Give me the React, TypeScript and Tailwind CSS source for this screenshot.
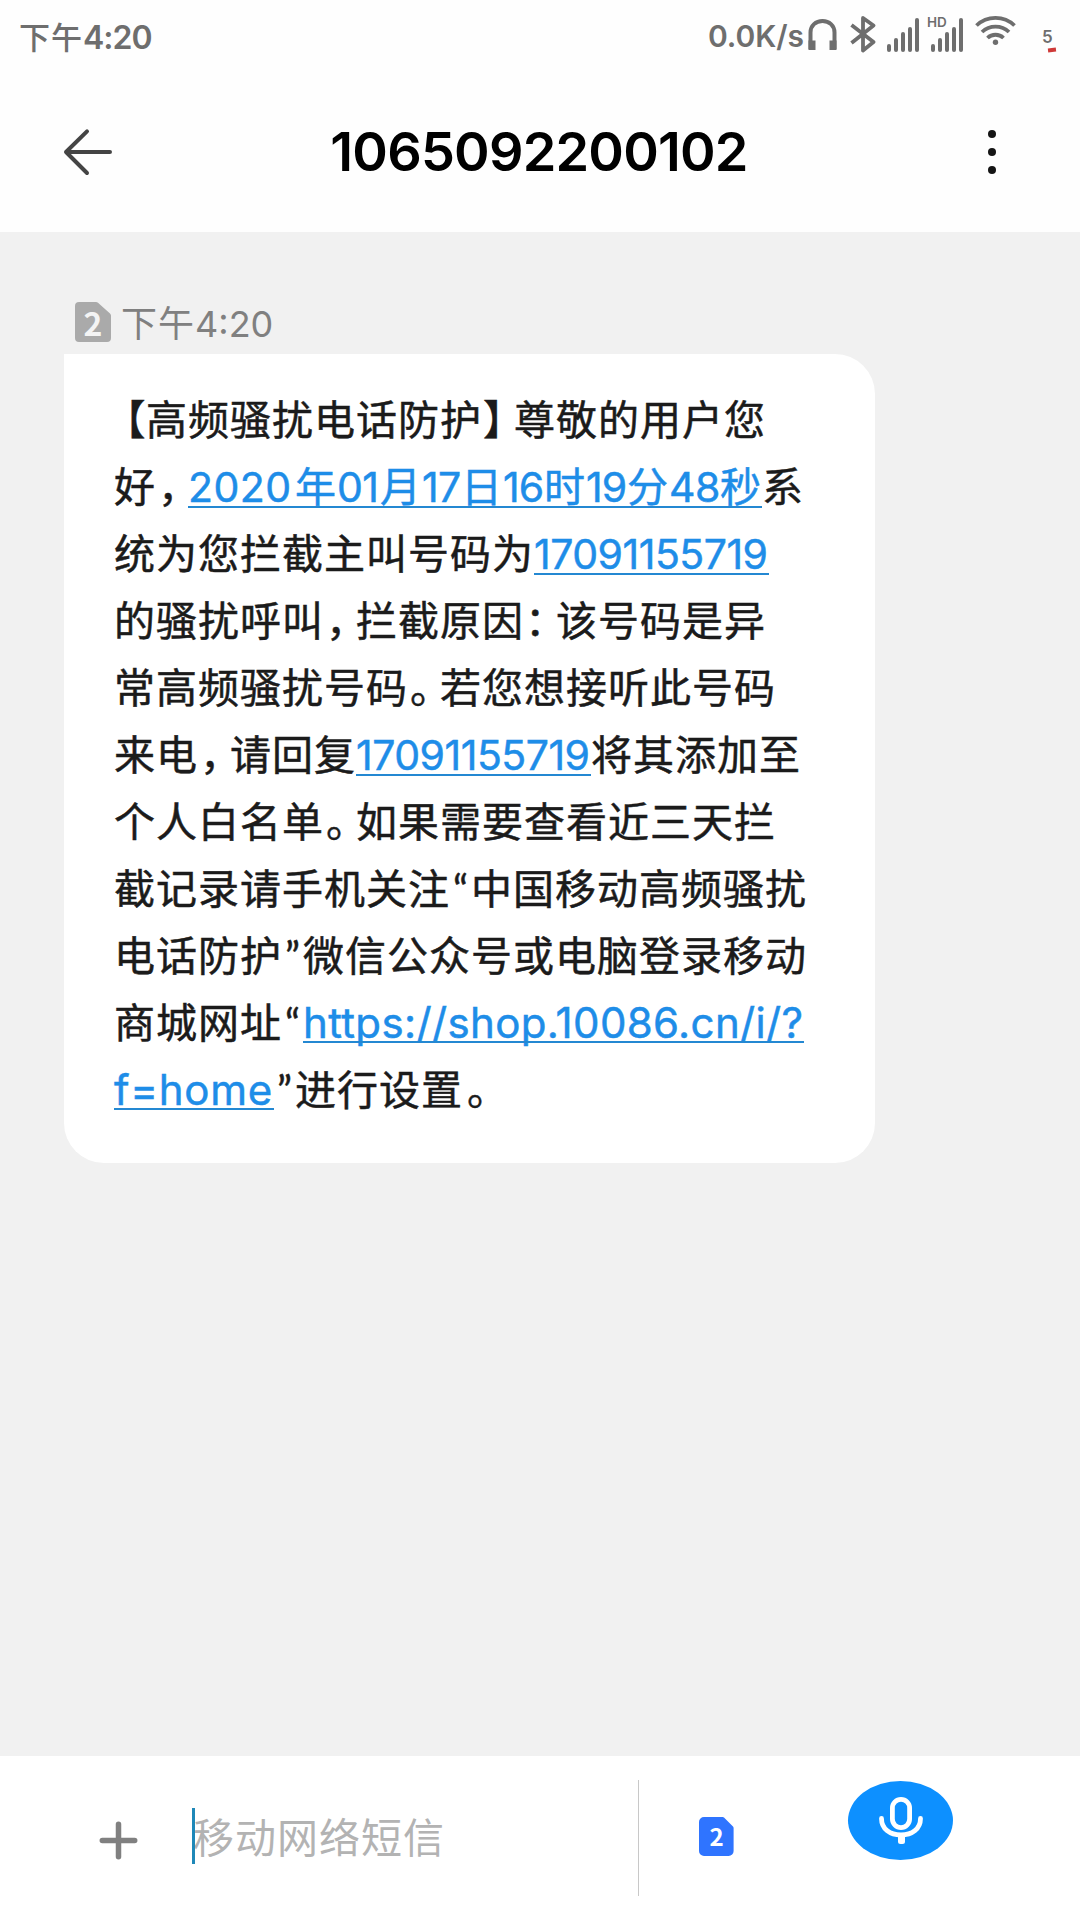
import type { ReactNode } from "react";

const PHONE = "17091155719";

function Han({ children }: { children: ReactNode }) {
  return <span className="tracking-[1px]">{children}</span>;
}

// Half-width punctuation set in a cell slightly narrower than a Han character.
function Mark({ children, className = "pl-[2px]" }: { children: ReactNode; className?: string }) {
  return <span className={`w-8 [font-feature-settings:'halt'] ${className}`}>{children}</span>;
}

function Quote({ children }: { children: ReactNode }) {
  return <span className="flex w-[21px] justify-center font-['Lato']">{children}</span>;
}

function Link({ children }: { children: ReactNode }) {
  return (
    <span className="relative flex items-baseline text-[#1e8de8]">
      {children}
      <span className="absolute right-0 bottom-[13px] left-0 h-[2px] bg-[#2488d2]" />
    </span>
  );
}

function Digits({ children, className }: { children: ReactNode; className: string }) {
  return <span className={`font-['Inter'] ${className}`}>{children}</span>;
}

function Phone() {
  return (
    <Link>
      <Digits className="w-[235px] tracking-[-0.5px]">{PHONE}</Digits>
    </Link>
  );
}

function Line({ children }: { children: ReactNode }) {
  return <div className="flex h-[67px] items-baseline">{children}</div>;
}

function SignalBars() {
  return (
    <svg width="33" height="36" viewBox="0 0 33 36" fill="#6e6e6e">
      <rect x="0" y="27" width="4" height="8" rx="2" />
      <rect x="7" y="21" width="4" height="14" rx="2" />
      <rect x="14" y="15" width="4" height="20" rx="2" />
      <rect x="21" y="10" width="4" height="25" rx="2" />
      <rect x="28" y="1" width="4" height="34" rx="2" />
    </svg>
  );
}

function StatusBar() {
  return (
    <div className="flex h-[72px] items-start justify-between pr-6 pl-[19px] text-[#6e6e6e]">
      <div className="flex h-[72px] items-baseline text-[31px] leading-[71px] font-medium">
        <span className="w-[64px] tracking-[1px]">下午</span>
        <span className="font-['Inter'] text-[32px] font-semibold tracking-[-1px]">4:20</span>
      </div>
      <div className="flex">
        <span className="w-[100px] font-['Inter'] text-[30px] leading-[72px] font-semibold tracking-[-0.1px]">
          0.0K/s
        </span>
        <svg className="mt-[18px]" width="29" height="33" viewBox="0 0 29 33" fill="none" stroke="#6e6e6e" strokeWidth="4">
          <path d="M2.5 31V14.5C2.5 7.5 7.8 3 14.5 3s12 4.500 12 11.500V31" />
          <path d="M.500 22.500h7V32h-7zM21.500 22.500h7V32h-7z" fill="#6e6e6e" stroke="none" />
        </svg>
        <svg className="mt-4 ml-[13px]" width="26" height="37" viewBox="0 0 26 37" fill="none" stroke="#6e6e6e" strokeWidth="3.800" strokeLinejoin="round">
          <path d="M1.500 9 23.500 26 13 34.500V2L23.500 9.500 1.500 27" />
        </svg>
        <div className="mt-[17px] ml-[11px]">
          <SignalBars />
        </div>
        <div className="relative mt-[17px] ml-[11px]">
          <SignalBars />
          <span className="absolute -top-[3px] -left-[4px] font-['Inter'] text-[13.500px] leading-4 font-semibold">HD</span>
        </div>
        <svg className="mt-[15px] ml-[11px]" width="42" height="31" viewBox="0 0 42 31" fill="none" stroke="#6e6e6e" strokeWidth="3.800">
          <path d="M1.500 10.500a27.500 27.500 0 0 1 38 0M7 17a19.500 19.500 0 0 1 27 0M12.500 23a11.500 11.500 0 0 1 16 0" />
          <circle cx="20.500" cy="27.300" r="2.700" fill="#6e6e6e" stroke="none" />
        </svg>
        <div className="mt-[28px] ml-[25px] w-[14px]">
          <div className="font-['Inter'] text-[17px] leading-[18px] font-semibold">5</div>
          <div className="mt-[2px] ml-[6px] h-[4px] w-[8px] -rotate-6 bg-[#cf3a38]" />
        </div>
      </div>
    </div>
  );
}

function Header() {
  return (
    <div className="flex h-40 items-center pr-[84px] pl-[63px]">
      <svg width="49" height="48" viewBox="0 0 49 48" fill="none" stroke="#444" strokeWidth="4" strokeLinecap="round" strokeLinejoin="round">
        <path d="M47 24H3M24 3.300 3 24 24 45" />
      </svg>
      <h1 className="mr-[22px] flex-1 text-center font-['Inter'] text-[54px] leading-none font-semibold tracking-[-0.8px] text-black">
        1065092200102
      </h1>
      <div className="flex w-2 flex-col gap-[10px]">
        <span className="size-2 rounded-full bg-[#151515]" />
        <span className="size-2 rounded-full bg-[#151515]" />
        <span className="size-2 rounded-full bg-[#151515]" />
      </div>
    </div>
  );
}

function Message() {
  return (
    <div className="mt-[12px] ml-16 h-[809px] w-[811px] rounded-[40px] rounded-tl-none bg-white pt-[30px] pl-[50px] text-[41px] leading-[67px] whitespace-nowrap text-[#1b1b1b] [-webkit-text-stroke:0.5px]">
      <Line>
        <Mark className="pl-[11px]">【</Mark>
        <Han>高频骚扰电话防护</Han>
        <Mark className="pl-[1px]">】</Mark>
        <Han>尊敬的用户您</Han>
      </Line>
      <Line>
        <Han>好</Han>
        <Mark>，</Mark>
        <Link>
          <Digits className="w-[107px] tracking-[0.500px]">2020</Digits>
          <Han>年</Han>
          <Digits className="w-[43px] tracking-[-0.600px]">01</Digits>
          <Han>月</Han>
          <Digits className="w-[39px] tracking-[-0.600px]">17</Digits>
          <Han>日</Han>
          <Digits className="w-[41px] tracking-[-1px]">16</Digits>
          <Han>时</Han>
          <Digits className="w-[41px] tracking-[-1px]">19</Digits>
          <Han>分</Han>
          <Digits className="w-[51px] tracking-[-0.500px]">48</Digits>
          <Han>秒</Han>
        </Link>
        <Han>系</Han>
      </Line>
      <Line>
        <Han>统为您拦截主叫号码为</Han>
        <Phone />
      </Line>
      <Line>
        <Han>的骚扰呼叫</Han>
        <Mark>，</Mark>
        <Han>拦截原因</Han>
        <Mark className="pl-[1px]">：</Mark>
        <Han>该号码是异</Han>
      </Line>
      <Line>
        <Han>常高频骚扰号码</Han>
        <Mark>。</Mark>
        <Han>若您想接听此号码</Han>
      </Line>
      <Line>
        <Han>来电</Han>
        <Mark>，</Mark>
        <Han>请回复</Han>
        <Phone />
        <Han>将其添加至</Han>
      </Line>
      <Line>
        <Han>个人白名单</Han>
        <Mark>。</Mark>
        <Han>如果需要查看近三天拦</Han>
      </Line>
      <Line>
        <Han>截记录请手机关注</Han>
        <Quote>“</Quote>
        <Han>中国移动高频骚扰</Han>
      </Line>
      <Line>
        <Han>电话防护</Han>
        <Quote>”</Quote>
        <Han>微信公众号或电脑登录移动</Han>
      </Line>
      <Line>
        <Han>商城网址</Han>
        <Quote>“</Quote>
        <Link>
          <Digits className="w-[501px] text-[42px] tracking-[0.360px]">https://shop.10086.cn/i/?</Digits>
        </Link>
      </Line>
      <Line>
        <Link>
          <Digits className="w-[160px] text-[42px] tracking-[0.700px]">f=home</Digits>
        </Link>
        <Quote>”</Quote>
        <Han>进行设置</Han>
        <Mark className="pl-[4px]">。</Mark>
      </Line>
    </div>
  );
}

function Composer() {
  return (
    <div className="flex h-[164px] items-start bg-white">
      <svg className="mt-[65px] ml-[99px]" width="39" height="39" viewBox="0 0 39 39" stroke="#808080" strokeWidth="5.500" strokeLinecap="round">
        <path d="M19.500 3.300v32.400M3.300 19.500h32.400" />
      </svg>
      <div className="relative mt-[52px] ml-[54px] h-14 w-[446px] text-[41px] leading-[54px] tracking-[1px] text-[#b3b3b3]">
        <span className="ml-[1px]">移动网络短信</span>
        <span className="absolute top-0 left-0 h-14 w-[3px] bg-[#1f88b8]" />
      </div>
      <div className="mt-6 h-[116px] w-px bg-[#c8c8c8]" />
      <div className="relative mt-[61px] ml-[60px] h-[39px] w-[35px]">
        <svg width="35" height="39" viewBox="0 0 35 39" fill="#2f74ff">
          <path d="M5 0H23.500a2 2 0 0 1 1.500.600L34 9.500a2 2 0 0 1 .600 1.500V34a5 5 0 0 1-5 5H5a5 5 0 0 1-5-5V5a5 5 0 0 1 5-5z" />
        </svg>
        <span className="absolute inset-0 text-center text-[24px] leading-[38px] font-bold text-white">2</span>
      </div>
      <div className="mt-[25px] ml-[114px] flex h-[79px] w-[105px] rounded-[50%] bg-[#0d90ff]">
        <svg className="mt-4 ml-[31px]" width="44" height="48" viewBox="0 0 44 48" fill="none" stroke="#fff" strokeWidth="4.800" strokeLinecap="round">
          <rect x="13.400" y="2.400" width="17.200" height="28.200" rx="8.600" />
          <path d="M2.500 21.500C2.500 32 11 38 22 38s19.500-6 19.500-16.500" />
          <path d="M19 38h7v6.500a2.500 2.500 0 0 1-2.500 2.500h-2a2.500 2.500 0 0 1-2.500-2.500z" fill="#fff" stroke="none" />
        </svg>
      </div>
    </div>
  );
}

export default function App() {
  return (
    <div lang="zh-CN" className="flex h-[1920px] w-[1080px] flex-col bg-[#f1f1f1] font-['Noto_Sans_CJK_SC',sans-serif]">
      <div className="h-[232px] bg-[#fefefe]">
        <StatusBar />
        <Header />
      </div>
      <div className="grow">
        <div className="mt-[70px] ml-[75px] flex h-10 items-center">
          <div className="relative h-10 w-9">
            <svg width="36" height="40" viewBox="0 0 36 40" fill="#aaaaaa">
              <path d="M4 0H21a3 3 0 0 1 2 .800L35 11.500a3 3 0 0 1 1 2V36a4 4 0 0 1-4 4H4a4 4 0 0 1-4-4V4a4 4 0 0 1 4-4z" />
            </svg>
            <span className="absolute inset-0 text-center text-[32px] leading-10 font-bold text-[#f4f4f4]">2</span>
          </div>
          <div className="ml-[10px] flex items-baseline text-[36px] leading-10 whitespace-nowrap text-[#808080]">
            <span className="w-[74px] tracking-[1px]">下午</span>
            <span className="font-['Inter'] text-[36px]">4:20</span>
          </div>
        </div>
        <Message />
      </div>
      <Composer />
    </div>
  );
}
